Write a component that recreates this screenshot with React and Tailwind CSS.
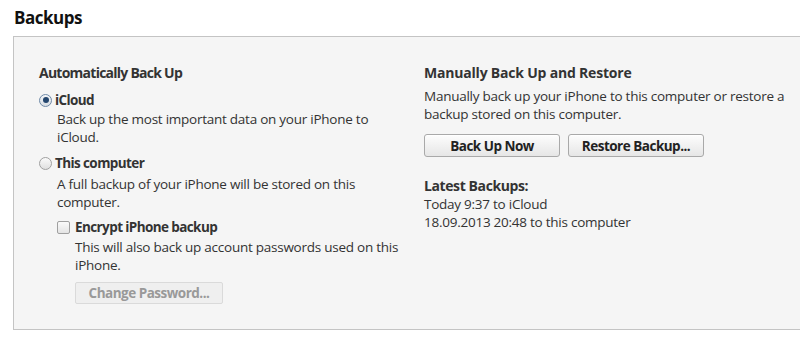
export default function App() {
  const btn =
    "h-[23px] rounded-[3px] border border-[#a9a9a9] bg-gradient-to-b from-[#fdfdfd] to-[#e6e6e6] text-[13.5px] font-bold text-[#222] tracking-[-0.5px] flex items-center justify-center shadow-[inset_0_1px_0_#fff]";
  return (
    <div className="w-[800px] h-[337px] bg-white overflow-hidden text-[#333]" style={{ fontFamily: '"Open Sans", "Noto Sans", sans-serif' }}>
      <div className="pl-[14px] pt-[4px] h-[32px] text-[17px] font-bold text-[#111] leading-[28px] tracking-[-0.5px]">Backups</div>
      <div className="ml-[13px] mt-[4px] h-[294px] border border-r-0 border-[#c4c4c4] bg-[#f5f5f5] pl-[25px] pt-[27px] flex text-[13.5px] leading-[18px] tracking-[-0.25px]">
        <div className="w-[385px] flex flex-col">
          <div className="text-[14px] font-bold tracking-[-0.75px]">Automatically Back Up</div>
          <div className="mt-[9px] flex items-center gap-[3px] font-bold tracking-[-0.6px]">
            <span className="w-[13px] h-[13px] rounded-full border border-[#6f8aa8] bg-gradient-to-b from-[#f4f6f8] to-[#d8dde3] flex items-center justify-center">
              <span className="w-[6px] h-[6px] rounded-full bg-[#24466e]" />
            </span>
            iCloud
          </div>
          <div className="mt-[1px] pl-[18px]">
            Back up the most important data on your iPhone to
            <br />
            iCloud.
          </div>
          <div className="mt-[8px] flex items-center gap-[3px] font-bold tracking-[-0.6px]">
            <span className="w-[13px] h-[13px] rounded-full border border-[#a0a0a0] bg-gradient-to-b from-[#fafafa] to-[#e0e0e0]" />
            This computer
          </div>
          <div className="mt-[3px] pl-[18px]">
            A full backup of your iPhone will be stored on this
            <br />
            computer.
          </div>
          <div className="mt-[7px] pl-[18px] flex items-center gap-[5px] font-bold tracking-[-0.6px]">
            <span className="w-[13px] h-[13px] rounded-[2px] border border-[#a0a0a0] bg-gradient-to-b from-[#fafafa] to-[#e4e4e4]" />
            Encrypt iPhone backup
          </div>
          <div className="mt-[2px] pl-[36px]">
            This will also back up account passwords used on this
            <br />
            iPhone.
          </div>
          <div className="mt-[8px] pl-[36px]">
            <div className="w-[148px] h-[22px] rounded-[2px] border border-[#dadada] bg-[#efefef] text-[#999] font-bold text-[13.5px] tracking-[-0.5px] flex items-center justify-center">
              Change Password...
            </div>
          </div>
        </div>
        <div className="flex flex-col">
          <div className="text-[14px] font-bold tracking-[-0.2px]">Manually Back Up and Restore</div>
          <div className="mt-[5px]">
            Manually back up your iPhone to this computer or restore a
            <br />
            backup stored on this computer.
          </div>
          <div className="mt-[11px] flex gap-[8px]">
            <div className={`${btn} w-[136px]`}>Back Up Now</div>
            <div className={`${btn} w-[136px]`}>Restore Backup...</div>
          </div>
          <div className="mt-[20px] text-[14px] font-bold tracking-[-0.4px]">Latest Backups:</div>
          <div>Today 9:37 to iCloud</div>
          <div>18.09.2013 20:48 to this computer</div>
        </div>
      </div>
    </div>
  );
}
